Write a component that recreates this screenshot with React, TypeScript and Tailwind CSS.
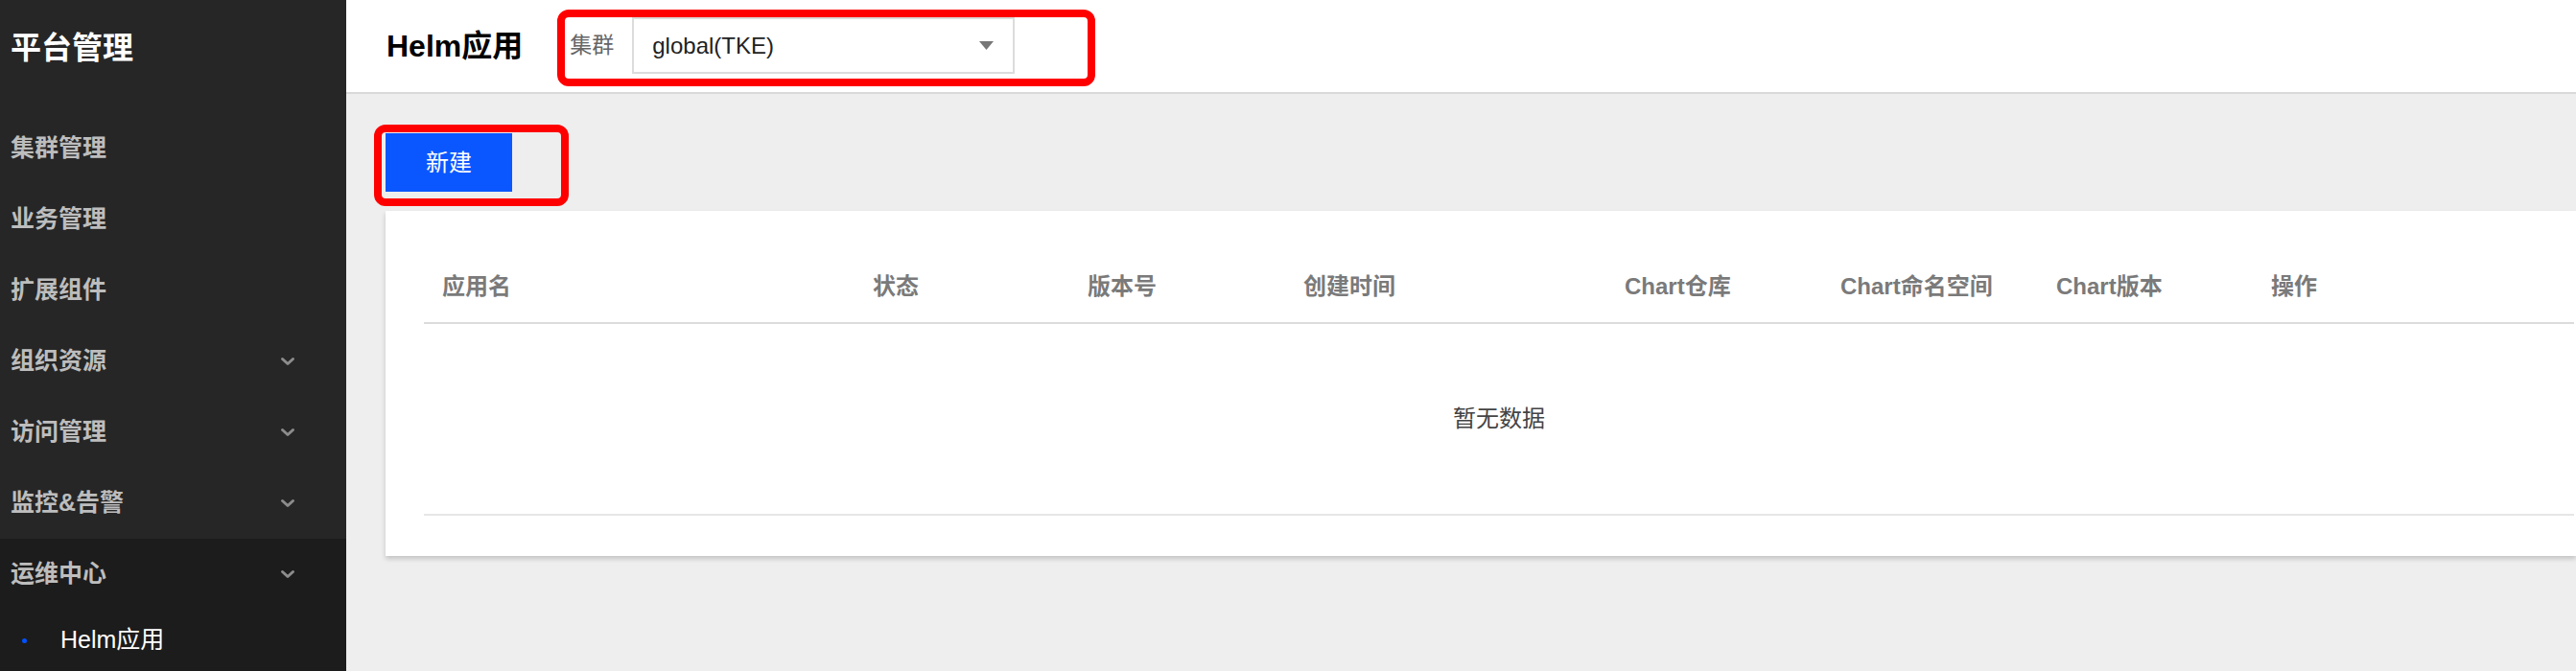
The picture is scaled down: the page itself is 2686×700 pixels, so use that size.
import React from 'react';

const FONT = { fontFamily: '"Liberation Sans", "Noto Sans CJK SC", sans-serif' };

interface NavItem {
  label: string;
  caret?: boolean;
}

const NAV: NavItem[] = [
  { label: '集群管理' },
  { label: '业务管理' },
  { label: '扩展组件' },
  { label: '组织资源', caret: true },
  { label: '访问管理', caret: true },
  { label: '监控&告警', caret: true },
];

const COLUMNS = [
  { title: '应用名', width: 'w-[449px]' },
  { title: '状态', width: 'w-[224px]' },
  { title: '版本号', width: 'w-[225px]' },
  { title: '创建时间', width: 'w-[335px]' },
  { title: 'Chart仓库', width: 'w-[225px]' },
  { title: 'Chart命名空间', width: 'w-[225px]' },
  { title: 'Chart版本', width: 'w-[224px]' },
  { title: '操作', width: 'flex-1' },
];

const Caret = () => (
  <svg width="16" height="10" viewBox="0 0 16 10" fill="none">
    <polyline points="2.5,2.5 8,7.5 13.5,2.5" stroke="#8c8c8c" strokeWidth="3" strokeLinecap="round" strokeLinejoin="round" />
  </svg>
);

const Sidebar: React.FC = () => (
  <aside className="w-[361px] shrink-0 bg-[#262626] flex flex-col">
    <div className="h-[100px] flex items-center pl-[11px] text-[32px] font-bold text-white">平台管理</div>
    <div className="pt-[18px]">
      {NAV.map(item => (
        <div key={item.label} className="h-[74px] flex items-center justify-between pl-[11px] pr-[53px]">
          <span className="text-[25px] font-semibold text-[#bdbdbd]">{item.label}</span>
          {item.caret && <Caret />}
        </div>
      ))}
    </div>
    {/* expanded group */}
    <div className="flex-1 bg-[#1c1c1c]">
      <div className="h-[74px] flex items-center justify-between pl-[11px] pr-[53px]">
        <span className="text-[25px] font-semibold text-[#bdbdbd]">运维中心</span>
        <Caret />
      </div>
      <div className="h-[64px] flex items-center pl-[23px]">
        <span className="w-[5px] h-[5px] rounded-full bg-[#0052ff]" />
        <span className="ml-[35px] text-[25px] text-white">Helm应用</span>
      </div>
    </div>
  </aside>
);

export default function App() {
  return (
    <div className="flex h-[700px] w-full overflow-hidden" style={FONT}>
      <Sidebar />
      <main className="flex-1 flex flex-col bg-[#eeeeee] min-w-0">
        <header className="h-[98px] shrink-0 bg-white border-b-2 border-[#d9d9d9] flex items-center pl-[42px]">
          <h1 className="text-[32px] font-bold text-black">Helm应用</h1>
          <div className="ml-[36px] mt-[4px] h-[80px] border-[8px] border-[#ff0000] rounded-[12px] flex items-start pl-[5px] pr-[76px]">
            <span className="text-[23px] text-[#666] leading-[59px]">集群</span>
            <div className="ml-[19px] w-[399px] h-[59px] border-2 border-[#dcdcdc] bg-white flex items-center justify-between pl-[19px] pr-[20px]">
              <span className="text-[24px] text-[#222]">global(TKE)</span>
              <svg width="15" height="9" viewBox="0 0 15 9">
                <polygon points="0,0 15,0 7.5,9" fill="#777" />
              </svg>
            </div>
          </div>
        </header>

        <div className="pt-[32px] pl-[29px]">
          <div className="inline-flex border-[8px] border-[#ff0000] rounded-[12px] pt-[1px] pl-[4px] pr-[51px] pb-[7px]">
            <button className="w-[132px] h-[61px] bg-[#0b57ff] text-white text-[24px]">新建</button>
          </div>
        </div>

        <div className="mt-[5px] ml-[41px] h-[360px] bg-white shadow-[0_3px_5px_rgba(0,0,0,0.18)] pl-[40px] pr-[2px] pt-[42px]">
          <div className="h-[76px] flex items-center border-b-2 border-[#dcdcdc]">
            {COLUMNS.map(col => (
              <div key={col.title} className={`${col.width} pl-[19px] text-[24px] font-semibold text-[#7a7a7a] whitespace-nowrap`}>
                {col.title}
              </div>
            ))}
          </div>
          <div className="h-[200px] flex items-center justify-center border-b-2 border-[#e6e6e6]">
            <span className="text-[24px] text-[#444]">暂无数据</span>
          </div>
        </div>
      </main>
    </div>
  );
}
